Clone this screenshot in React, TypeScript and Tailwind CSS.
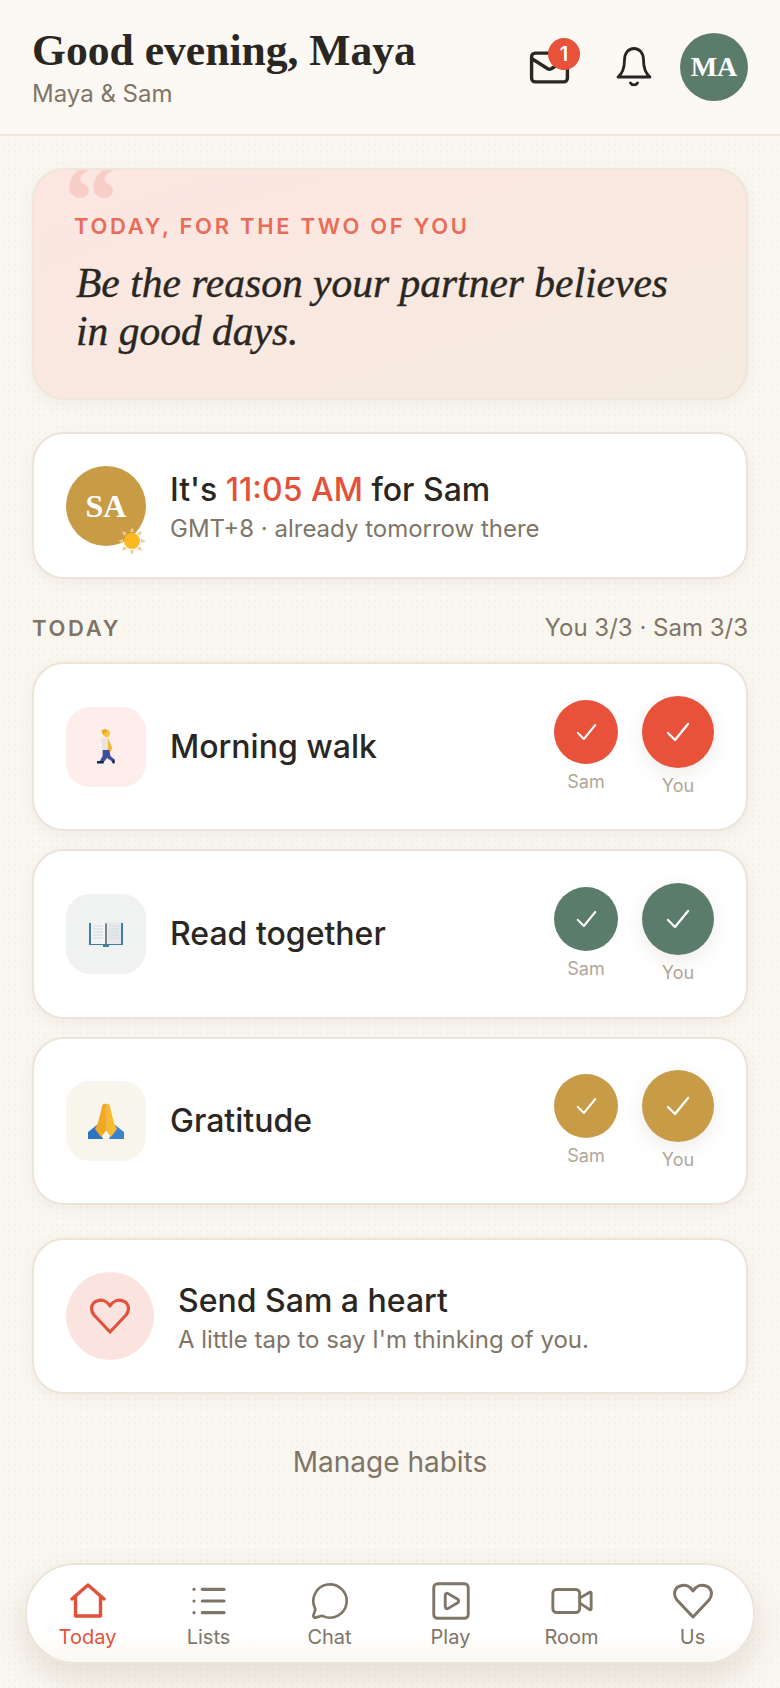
import { List, Mail, MessageCircle, SquarePlay, Video } from "lucide-react";
import type { ReactNode } from "react";

const serif = "font-['Liberation_Serif',serif]";

function Walker() {
  return (
    <svg width="18" height="35" viewBox="0 0 16 35" preserveAspectRatio="none">
      <path d="M5 4 C5 1 8 0 10 1 C12 2 12 6 10 8 C8 9 5 7 5 4 Z" fill="#f5c33b" />
      <path d="M4 1 L8 0 L9 3 L5 5 Z" fill="#e8a91f" />
      <path d="M4 9 H10 L11 21 H5 Z" fill="#e9e5d8" />
      <path d="M10 9 L13.5 19 L12 23 L9.5 21 Z" fill="#f0b93a" />
      <path d="M5 21 H11 L12 27 L16 31 L14 33 L9 29 L6 33 H2 L5 27 Z" fill="#3c4f9c" />
      <path d="M0 32 H6 V34.5 H0 Z" fill="#1d2550" />
      <path d="M13 33 L15 30 L16 33 L15 35 Z" fill="#1d2550" />
    </svg>
  );
}

function BookIcon() {
  return (
    <svg width="34" height="27" viewBox="0 0 34 27">
      <path d="M0 2 H34 V24 H20 V26 H14 V24 H0 Z" fill="#3f7ea3" />
      <path d="M2 1 H15 L17 3 V23 H2 Z" fill="#f1f3f4" />
      <path d="M32 1 H19 L17 3 V23 H32 Z" fill="#e6eaec" />
      <path d="M16.2 3 H17.8 V24 H16.2 Z" fill="#5d6a72" />
      <path d="M4 5 H14 M4 8 H14 M4 11 H14 M4 14 H14 M4 17 H14 M20 5 H30 M20 8 H30 M20 11 H30 M20 14 H30 M20 17 H30" stroke="#d3d9dc" strokeWidth="1" />
    </svg>
  );
}

function PrayIcon() {
  return (
    <svg width="36" height="36" viewBox="0 0 36 36">
      <path d="M0 36 V29 L9 22 L15 36 Z" fill="#2f74c0" />
      <path d="M36 36 V29 L27 22 L21 36 Z" fill="#3b82cc" />
      <path d="M17.5 1 C15 0 14 2 13.5 6 L10 20 L7 26 L13 34 L17.5 28 Z" fill="#f2a81f" />
      <path d="M18.5 1 C21 0 22 2 22.5 6 L26 20 L29 26 L23 34 L18.5 28 Z" fill="#f7bb2e" />
      <path d="M18 1 V28" stroke="#d98f16" strokeWidth="1" />
    </svg>
  );
}

function SunIcon() {
  return (
    <svg width="28" height="28" viewBox="0 0 28 28">
      <path
        d="M14 0 L16 5 H12 Z M14 28 L12 23 H16 Z M0 14 L5 12 V16 Z M28 14 L23 16 V12 Z M4 4 L9 6 L6 9 Z M24 24 L19 22 L22 19 Z M4 24 L6 19 L9 22 Z M24 4 L22 9 L19 6 Z"
        fill="#f9c58a"
      />
      <circle cx="14" cy="14" r="8" fill="#fbb91f" />
    </svg>
  );
}

function BellIcon() {
  return (
    <svg width="36" height="40" viewBox="0 0 36 40" fill="none" stroke="#262320" strokeWidth="2.8" strokeLinejoin="round" strokeLinecap="round">
      <path d="M2 30 C7 26 8.5 20 8.5 13 C8.5 6 12.5 1.5 18 1.5 C23.5 1.5 27.5 6 27.5 13 C27.5 20 29 26 34 30 Z" />
      <path d="M14.5 36 C16 38.5 20 38.5 21.5 36" />
    </svg>
  );
}

function HomeIcon() {
  return (
    <svg width="36" height="36" viewBox="0 0 36 36" fill="none" stroke="#e4513a" strokeWidth="3.4" strokeLinejoin="round" strokeLinecap="round">
      <path d="M2 16 L18 2 L34 16" />
      <path d="M5.5 14 V33 H30.5 V14" />
    </svg>
  );
}

function HeartIcon({ size, color, width }: { size: number; color: string; width: number }) {
  return (
    <svg width={size} height={size} viewBox="0 0 40 36" fill="none" stroke={color} strokeWidth={width} strokeLinejoin="round">
      <path d="M20 34 L4 17 C0 12 1 5 7 3 C12 1 17 3 20 8 C23 3 28 1 33 3 C39 5 40 12 36 17 Z" />
    </svg>
  );
}

function CheckMark({ big }: { big?: boolean }) {
  return (
    <svg width={big ? 24 : 21} height={big ? 20 : 18} viewBox="0 0 24 20" fill="none" stroke="white" strokeWidth="2.3" strokeLinecap="round" strokeLinejoin="round">
      <path d="M2 11 L9 18 L22 2" />
    </svg>
  );
}

function Card({ children, className }: { children: ReactNode; className: string }) {
  return (
    <div className={`flex items-center rounded-[32px] border-2 border-[#ece4d8] bg-white shadow-[0_4px_16px_rgba(90,70,40,0.06)] ${className}`}>
      {children}
    </div>
  );
}

function Tick({ who, color, big }: { who: string; color: string; big?: boolean }) {
  return (
    <div className="flex flex-col items-center">
      <div
        className={`flex items-center justify-center rounded-full ${big ? "h-[72px] w-[72px] shadow-[0_6px_20px_rgba(90,70,40,0.10)]" : "h-16 w-16"}`}
        style={{ backgroundColor: color }}
      >
        <CheckMark big={big} />
      </div>
      <span className="mt-[6px] text-[18px] leading-6 text-[#b0a797]">{who}</span>
    </div>
  );
}

const habits = [
  { name: "Morning walk", icon: <Walker />, tint: "bg-[#fdeeec]", color: "#e8513a", h: "h-[169px]" },
  { name: "Read together", icon: <BookIcon />, tint: "bg-[#f0f2f1]", color: "#5b7c6b", h: "h-[170px]" },
  { name: "Gratitude", icon: <PrayIcon />, tint: "bg-[#f8f5ec]", color: "#c89b47", h: "h-[168px]" },
];

const tabs = [
  { label: "Today", icon: <HomeIcon />, active: true },
  { label: "Lists", icon: <List size={40} strokeWidth={1.9} /> },
  { label: "Chat", icon: <MessageCircle size={40} strokeWidth={1.6} /> },
  { label: "Play", icon: <SquarePlay size={46} strokeWidth={1.5} /> },
  { label: "Room", icon: <Video size={46} strokeWidth={1.5} /> },
  { label: "Us", icon: <HeartIcon size={40} color="#7f7567" width={3} /> },
];

export default function App() {
  return (
    <div className="flex h-[1688px] w-[780px] flex-col overflow-hidden bg-[#faf7f1] font-['Inter',sans-serif] text-[#2a2622]">
      <header className="flex h-[136px] shrink-0 items-center justify-between border-b-2 border-[#f0e8dc] bg-[#fcf9f4] px-8">
        <div>
          <h1 className={`${serif} text-[43.6px] leading-[50px] font-bold`}>Good evening, Maya</h1>
          <p className="mt-[3px] text-[24px] leading-8 text-[#7f7567]">Maya &amp; Sam</p>
        </div>
        <div className="flex items-center">
          <div className="relative mr-[45px]">
            <Mail size={43} strokeWidth={1.9} />
            <span className="absolute -right-[9px] -top-2 flex h-8 w-8 items-center justify-center rounded-full bg-[#e8513a] text-[20px] font-semibold text-white">1</span>
          </div>
          <div className="mr-7"><BellIcon /></div>
          <div className={`${serif} flex h-[68px] w-[68px] items-center justify-center rounded-full bg-[#5b7c6b] text-[28px] font-bold text-white`}>MA</div>
        </div>
      </header>

      <main className="flex flex-1 flex-col bg-[radial-gradient(#f6f2ea_1px,transparent_1px)] bg-[length:6px_6px] px-8 pt-8">
        <div className="relative h-[232px] shrink-0 overflow-hidden rounded-[32px] border-2 border-[#efe5d9] bg-gradient-to-br from-[#fce6e1] to-[#f5ebe0] pl-10 pt-[42px] shadow-[0_4px_16px_rgba(90,70,40,0.06)]">
          <span className={`${serif} absolute left-[30px] -top-[24px] text-[110px] leading-[110px] font-bold text-[#f8cfc8]`}>“</span>
          <p className="relative text-[22px] leading-7 font-semibold tracking-[0.122em] text-[#ea6c58]">TODAY, FOR THE TWO OF YOU</p>
          <p className={`${serif} relative ml-[2px] mt-[19px] text-[41.5px] leading-[48px] font-medium italic [-webkit-text-stroke:0.4px_#2a2622]`}>
            Be the reason your partner believes
            <br />
            in good days.
          </p>
        </div>

        <Card className="mt-8 h-[147px] shrink-0 pl-8">
          <div className="relative shrink-0">
            <div className={`${serif} flex h-20 w-20 items-center justify-center rounded-full bg-[#c89b47] text-[32px] font-bold text-white`}>SA</div>
            <span className="absolute -bottom-[9px] right-0"><SunIcon /></span>
          </div>
          <div className="ml-6 pt-1">
            <p className="text-[32px] leading-10 font-medium">
              It's <span className="text-[#e4513a]">11:05 AM</span> for Sam
            </p>
            <p className="mt-[3px] text-[24px] leading-8 text-[#7f7567]">GMT+8 · already tomorrow there</p>
          </div>
        </Card>

        <div className="mt-[33px] flex h-8 shrink-0 items-center justify-between">
          <span className="text-[22px] font-semibold tracking-[0.12em] text-[#7f7567]">TODAY</span>
          <span className="text-[24px] text-[#7f7567]">You 3/3 · Sam 3/3</span>
        </div>

        <div className="mt-[18px] flex shrink-0 flex-col gap-[18px]">
          {habits.map((habit) => (
            <Card key={habit.name} className={`${habit.h} px-8`}>
              <div className={`flex h-20 w-20 shrink-0 items-center justify-center rounded-[24px] ${habit.tint}`}>{habit.icon}</div>
              <span className="ml-6 flex-1 text-[32px] font-medium">{habit.name}</span>
              <div className="flex items-start gap-6">
                <div className="pt-1"><Tick who="Sam" color={habit.color} /></div>
                <Tick who="You" color={habit.color} big />
              </div>
            </Card>
          ))}
        </div>

        <Card className="mt-[33px] h-[156px] shrink-0 pl-8">
          <div className="flex h-[88px] w-[88px] shrink-0 items-center justify-center rounded-full bg-[#fbe4df]">
            <HeartIcon size={40} color="#e4513a" width={3.2} />
          </div>
          <div className="ml-6 pt-1">
            <p className="text-[32px] leading-10 font-medium">Send Sam a heart</p>
            <p className="mt-[3px] text-[24px] leading-8 text-[#7f7567]">A little tap to say I'm thinking of you.</p>
          </div>
        </Card>

        <p className="mt-[47px] text-center text-[28px] text-[#7f7567]">Manage habits</p>

        <nav className="mt-auto mb-6 -mx-[7px] flex h-[101px] shrink-0 items-start rounded-[50px] border-2 border-[#ece4d8] bg-gradient-to-b from-white from-70% to-[#fbf8f3] pt-4 shadow-[0_14px_32px_rgba(90,70,40,0.14)]">
          {tabs.map((tab) => (
            <div key={tab.label} className={`flex flex-1 flex-col items-center ${tab.active ? "text-[#e4513a]" : "text-[#7f7567]"}`}>
              <div className="flex h-10 items-center justify-center">{tab.icon}</div>
              <span className="mt-[2px] text-[20px] leading-7">{tab.label}</span>
            </div>
          ))}
        </nav>
      </main>
    </div>
  );
}
